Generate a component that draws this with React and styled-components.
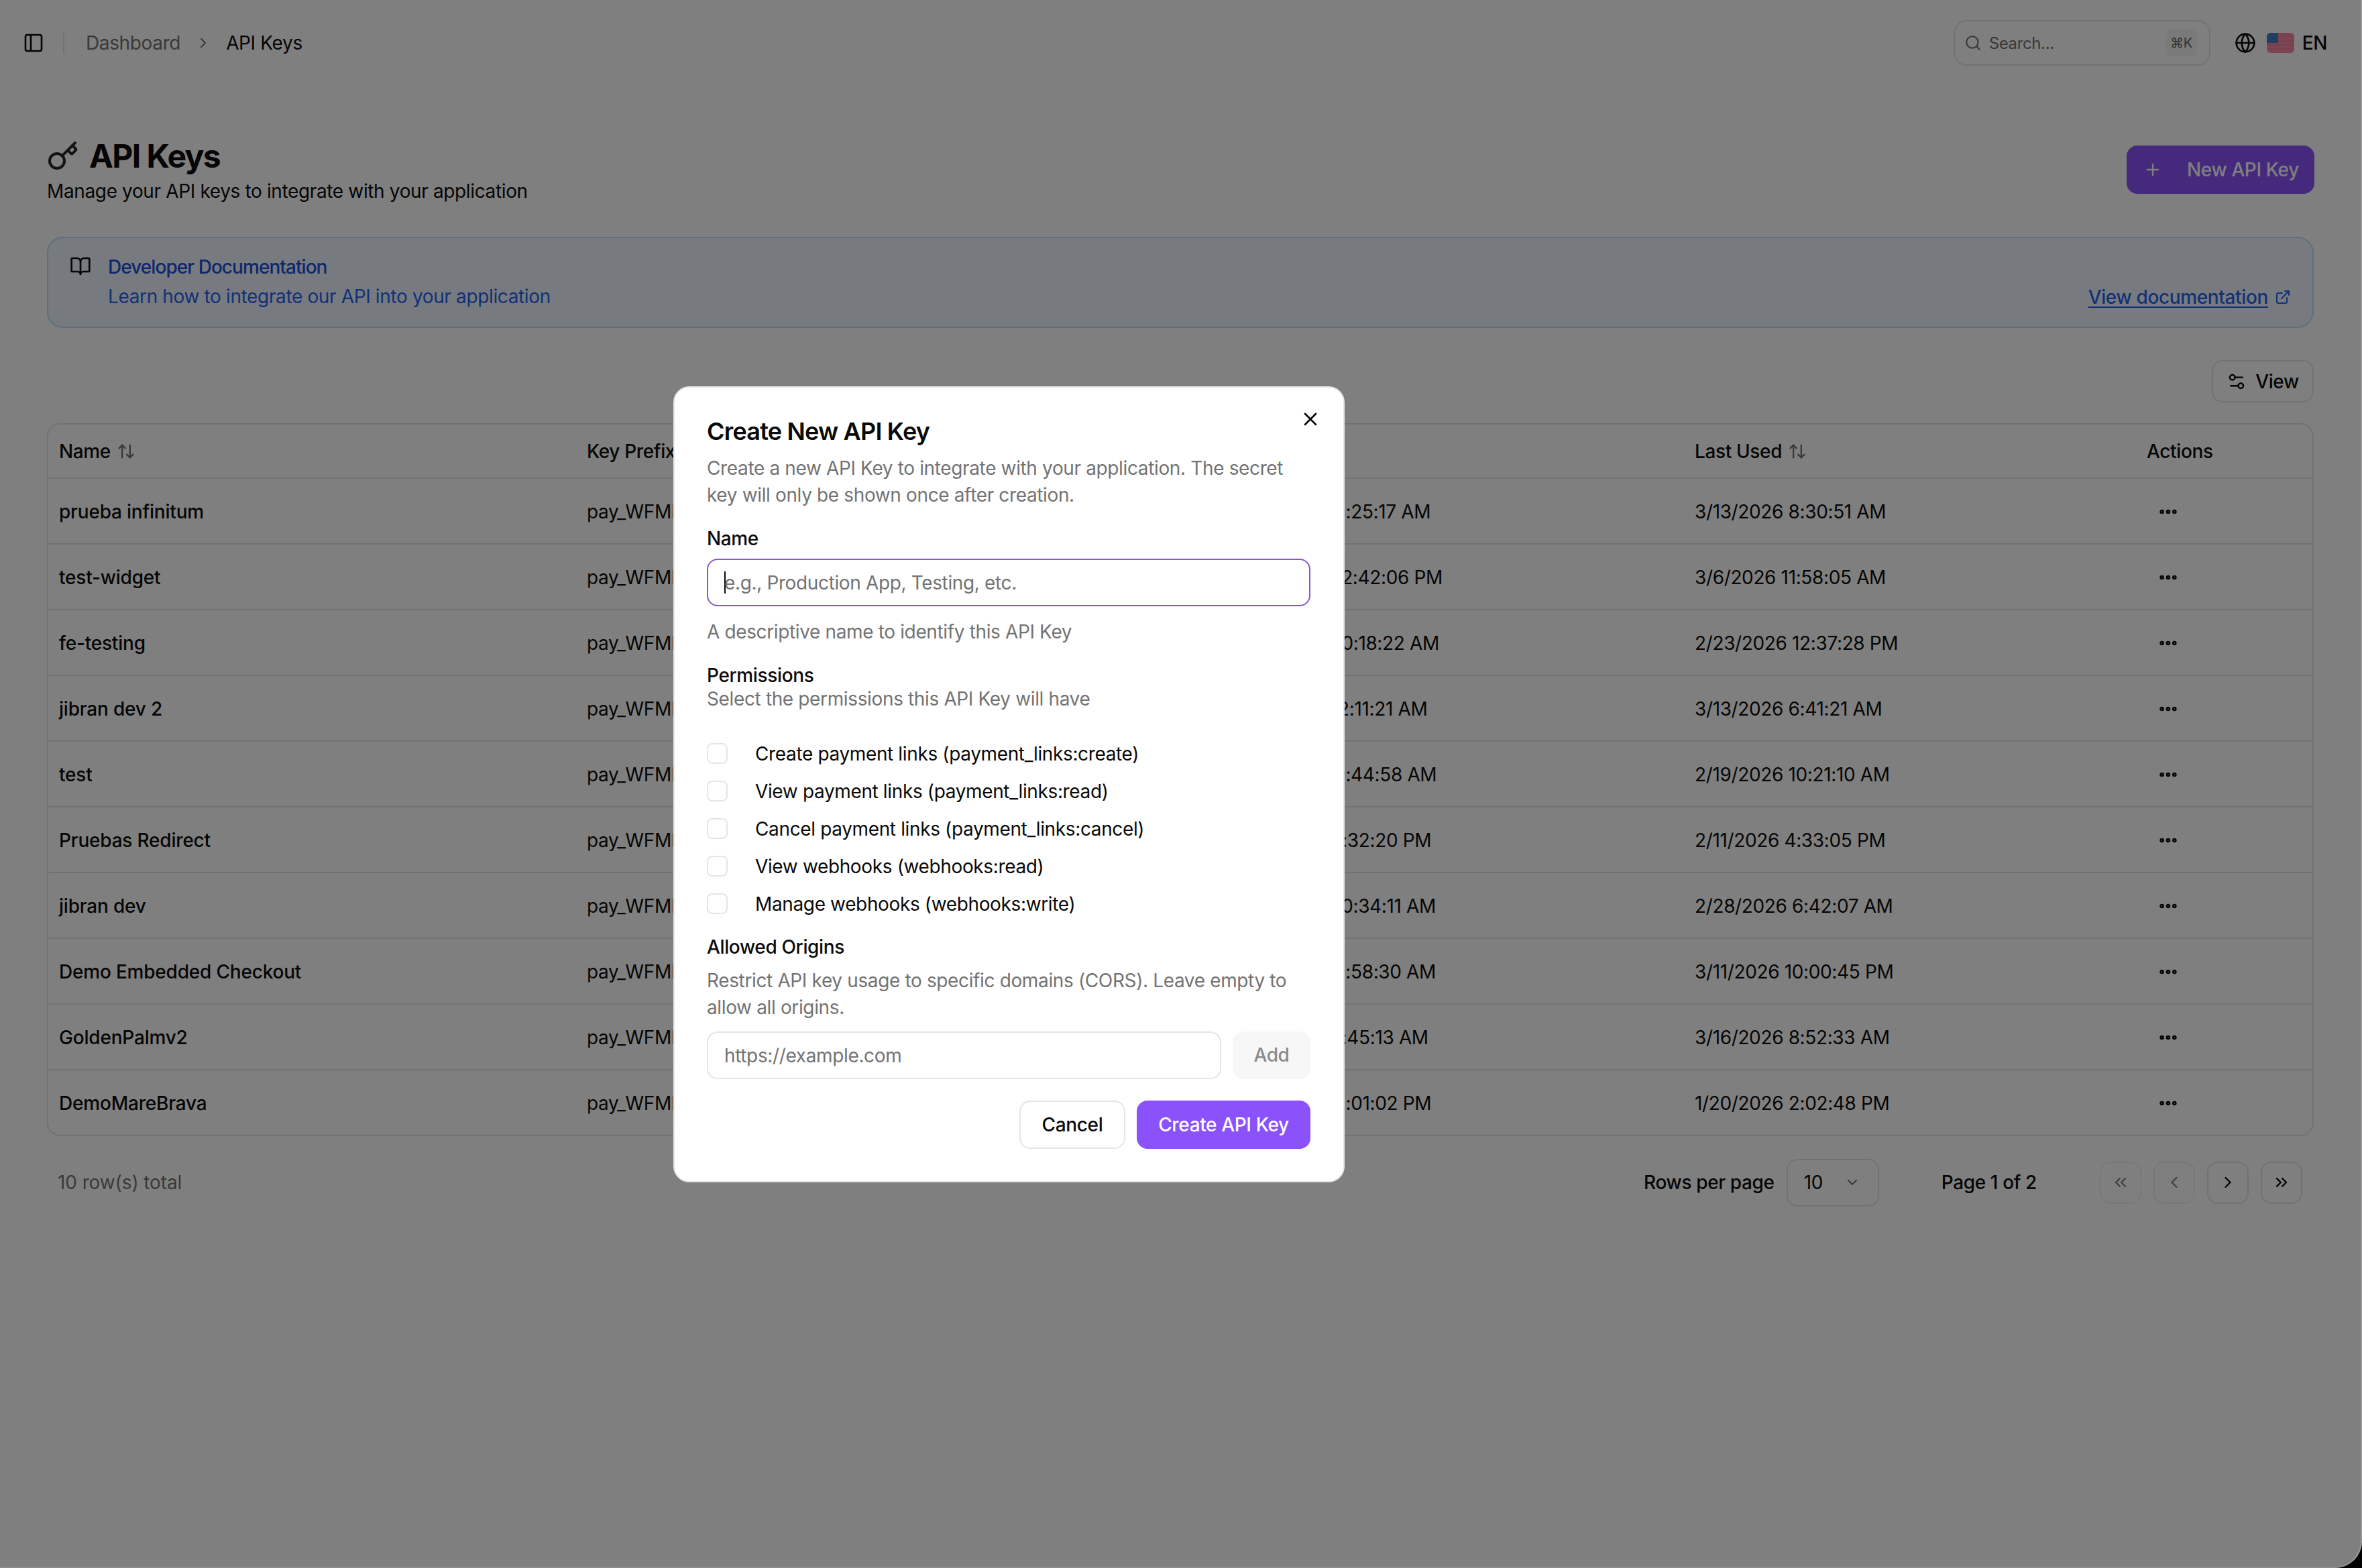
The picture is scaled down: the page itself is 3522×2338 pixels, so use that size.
import React from 'react';
import styled, { createGlobalStyle } from 'styled-components';
import {
  PanelLeft,
  ChevronRight,
  Search,
  Globe,
  Plus,
  BookOpen,
  ExternalLink,
  Settings2,
  ArrowUpDown,
  Ellipsis,
  ChevronDown,
  ChevronLeft,
  ChevronsLeft,
  ChevronsRight,
  Key,
  X,
} from 'lucide-react';

const GlobalStyle = createGlobalStyle`
  html, body {
    margin: 0;
    padding: 0;
    background: #000;
  }
  * { box-sizing: border-box; }
  button { letter-spacing: inherit; }
`;

const Window = styled.div`
  position: relative;
  width: 3522px;
  height: 2338px;
  overflow: hidden;
  background: #fff;
  border-bottom-right-radius: 40px;
  font-family: Inter, "Liberation Sans", sans-serif;
  font-size: 28px;
  letter-spacing: -0.013em;
  color: #0a0a0a;
`;

const TopBar = styled.header`
  height: 128px;
  padding: 0 52px 0 34px;
  display: flex;
  align-items: center;
`;
const Separator = styled.span`
  width: 2px;
  height: 32px;
  background: #e5e5e5;
  margin: 0 32px 0 28px;
`;
const Crumb = styled.span`
  color: ${(p) => (p.$current ? '#0a0a0a' : '#737373')};
`;
const CrumbSep = styled.span`
  display: flex;
  color: #737373;
  margin: 0 22px;
`;
const SearchBox = styled.div`
  margin-left: auto;
  width: 383px;
  height: 68px;
  border: 2px solid #e5e5e5;
  border-radius: 20px;
  padding: 0 18px 0 14px;
  display: flex;
  align-items: center;
  gap: 11px;
  font-size: 24px;
  color: #737373;
`;
const Kbd = styled.span`
  margin-left: auto;
  width: 46px;
  height: 40px;
  border-radius: 8px;
  background: #f5f5f5;
  display: flex;
  align-items: center;
  justify-content: center;
  font-size: 20px;
  font-weight: 500;
`;
const LangPicker = styled.div`
  margin-left: 36px;
  display: flex;
  align-items: center;
  font-weight: 500;
`;
const Flag = styled.svg`
  width: 41px;
  height: 30px;
  margin: 0 12px 0 16px;
  border-radius: 6px;
`;

const Main = styled.main`
  padding: 0 72px 0 70px;
`;
const TitleRow = styled.div`
  margin-top: 73px;
  display: flex;
  justify-content: space-between;
  align-items: flex-start;
`;
const TitleLine = styled.div`
  display: flex;
  align-items: center;
  gap: 15px;
`;
const PageTitle = styled.h1`
  margin: 0;
  font-size: 48px;
  line-height: 64px;
  font-weight: 700;
  letter-spacing: -1.6px;
`;
const PageSub = styled.p`
  margin: 0;
  line-height: 40px;
`;
const PrimaryButton = styled.button`
  height: 72px;
  width: ${(p) => p.$w}px;
  border: 0;
  border-radius: 16px;
  background: #8b52fb;
  color: #fff;
  font: 500 28px Inter, sans-serif;
  white-space: nowrap;
  display: flex;
  align-items: center;
  justify-content: center;
  padding: 0;
`;
const NewKeyButton = styled(PrimaryButton)`
  margin-top: 16px;
  margin-right: -1px;
  justify-content: flex-start;
  padding-left: 25px;
  gap: 37px;
`;
const DocCard = styled.section`
  margin-top: 48px;
  height: 136px;
  border: 2px solid #bfdbfe;
  border-radius: 24px;
  background: #eff6ff;
  padding: 21px 32px 0;
  display: flex;
  color: #2563eb;
`;
const DocIcon = styled.span`
  display: flex;
  margin-top: 5px;
  height: 32px;
  color: #0a0a0a;
`;
const DocText = styled.div`
  margin-left: 25px;
  line-height: 44px;
`;
const DocTitle = styled.div`
  font-weight: 500;
  letter-spacing: -0.95px;
  color: #1d4ed8;
`;
const DocLink = styled.a`
  margin-left: auto;
  align-self: flex-end;
  margin-bottom: 27px;
  display: flex;
  align-items: center;
  gap: 10px;
  font-weight: 500;
  span { text-decoration: underline; text-underline-offset: 4px; }
`;
const ToolRow = styled.div`
  margin-top: 48px;
  display: flex;
  justify-content: flex-end;
`;
const ViewButton = styled.button`
  height: 63px;
  width: 152px;
  border: 2px solid #e5e5e5;
  border-radius: 16px;
  background: #fff;
  font: 500 28px Inter, sans-serif;
  color: #0a0a0a;
  display: flex;
  align-items: center;
  justify-content: center;
  gap: 13px;
`;

const Table = styled.div`
  margin-top: 31px;
  border: 2px solid #e5e5e5;
  border-radius: 20px;
`;
const Row = styled.div`
  display: grid;
  grid-template-columns: 787px 975px 677px 674px 1fr;
  height: ${(p) => (p.$head ? 81 : p.$last ? 96 : 98)}px;
  align-items: center;
  border-bottom: ${(p) => (p.$last ? 0 : '2px solid #e5e5e5')};
  font-weight: ${(p) => (p.$head ? 500 : 400)};
`;
const Cell = styled.div`
  padding: 1px 0 0 16px;
  white-space: nowrap;
  display: flex;
  align-items: center;
  gap: 9px;
  font-weight: ${(p) => (p.$name ? 500 : 'inherit')};
  letter-spacing: ${(p) => (p.$name ? '-0.2px' : 'inherit')};
`;
const RowMenu = styled.span`
  display: flex;
  margin-left: 16px;
`;

const Pager = styled.div`
  margin-top: 33px;
  height: 72px;
  padding: 0 17px 0 16px;
  display: flex;
  align-items: center;
`;
const TotalText = styled.span`
  color: #737373;
  letter-spacing: -0.1px;
  margin-right: auto;
`;
const PagerLabel = styled.span`
  font-weight: 500;
`;
const RowsSelect = styled.div`
  width: 138px;
  height: 71px;
  margin: 0 93px 0 18px;
  padding: 0 26px 0 24px;
  border: 2px solid #e5e5e5;
  border-radius: 16px;
  display: flex;
  align-items: center;
  justify-content: space-between;
`;
const PageButtons = styled.div`
  margin-left: 94px;
  display: flex;
  gap: 18px;
`;
const PageButton = styled.button`
  width: 62px;
  height: 63px;
  border: 2px solid #e5e5e5;
  border-radius: 16px;
  background: #fff;
  padding: 0;
  display: flex;
  align-items: center;
  justify-content: center;
  color: #0a0a0a;
  opacity: ${(p) => (p.disabled ? 0.5 : 1)};
`;

const Overlay = styled.div`
  position: absolute;
  inset: 0;
  background: rgba(0, 0, 0, 0.5);
  display: flex;
  align-items: center;
  padding-left: 1004px;
  &::after {
    content: '';
    position: absolute;
    inset: 0;
    border-right: 2px solid rgba(255, 255, 255, 0.2);
    border-bottom: 2px solid rgba(255, 255, 255, 0.1);
    border-bottom-right-radius: 40px;
    pointer-events: none;
  }
`;
const Dialog = styled.div`
  position: relative;
  width: 1001px;
  height: 1187px;
  background: #fff;
  border: 2px solid #e5e5e5;
  border-radius: 24px;
  padding: 43px 49px 0 48px;
`;
const CloseButton = styled.button`
  position: absolute;
  top: 31px;
  right: 33px;
  border: 0;
  background: none;
  padding: 0;
  display: flex;
  color: #0a0a0a;
`;
const DialogTitle = styled.h2`
  margin: 0;
  font-size: 36px;
  line-height: 44px;
  font-weight: 600;
  letter-spacing: -0.8px;
`;
const Muted = styled.p`
  margin: ${(p) => p.$mt || 0}px 0 0;
  color: #737373;
  line-height: 40px;
`;
const Label = styled.div`
  margin-top: ${(p) => p.$mt || 0}px;
  font-weight: 500;
  line-height: 34px;
`;
const Field = styled.div`
  height: 71px;
  flex: 1;
  border: 2px solid ${(p) => (p.$focus ? '#8458d0' : '#e5e5e5')};
  border-radius: 16px;
  padding: 1px 24px 0;
  display: flex;
  align-items: center;
  color: #737373;
`;
const NameField = styled(Field)`
  margin-top: 13px;
`;
const Caret = styled.span`
  width: 2px;
  height: 33px;
  margin-right: -2px;
  background: #0a0a0a;
`;
const PermList = styled.div`
  margin-top: 34px;
`;
const PermRow = styled.label`
  height: 56px;
  display: flex;
  align-items: center;
  gap: 41px;
`;
const CheckBox = styled.span`
  width: 31px;
  height: 31px;
  border: 2px solid #e5e5e5;
  border-radius: 8px;
`;
const OriginRow = styled.div`
  margin-top: 16px;
  display: flex;
  gap: 17px;
`;
const AddButton = styled.button`
  width: 116px;
  height: 71px;
  border: 0;
  border-radius: 16px;
  background: #f7f7f7;
  color: #8a8a8a;
  font: 500 28px Inter, sans-serif;
`;
const DialogActions = styled.div`
  margin-top: 32px;
  display: flex;
  justify-content: flex-end;
  gap: 17px;
`;
const CancelButton = styled.button`
  width: 158px;
  height: 72px;
  border: 2px solid #e5e5e5;
  border-radius: 16px;
  background: #fff;
  color: #0a0a0a;
  font: 500 28px Inter, sans-serif;
`;

const rows = [
  ['prueba infinitum', '3/13/2026 8:25:17 AM', '3/13/2026 8:30:51 AM'],
  ['test-widget', '2/12/2026 12:42:06 PM', '3/6/2026 11:58:05 AM'],
  ['fe-testing', '2/13/2026 10:18:22 AM', '2/23/2026 12:37:28 PM'],
  ['jibran dev 2', '1/10/2026 12:11:21 AM', '3/13/2026 6:41:21 AM'],
  ['test', '2/19/2026 9:44:58 AM', '2/19/2026 10:21:10 AM'],
  ['Pruebas Redirect', '2/11/2026 4:32:20 PM', '2/11/2026 4:33:05 PM'],
  ['jibran dev', '2/12/2026 10:34:11 AM', '2/28/2026 6:42:07 AM'],
  ['Demo Embedded Checkout', '3/21/2026 9:58:30 AM', '3/11/2026 10:00:45 PM'],
  ['GoldenPalmv2', '3/11/2026 8:45:13 AM', '3/16/2026 8:52:33 AM'],
  ['DemoMareBrava', '1/20/2026 2:01:02 PM', '1/20/2026 2:02:48 PM'],
];

const permissions = [
  'Create payment links (payment_links:create)',
  'View payment links (payment_links:read)',
  'Cancel payment links (payment_links:cancel)',
  'View webhooks (webhooks:read)',
  'Manage webhooks (webhooks:write)',
];

const UsFlag = () => (
  <Flag viewBox="0 0 41 30">
    <rect width="41" height="30" fill="#f5829f" />
    <path d="M0 9h41M0 15h41M0 21h41M0 27h41" stroke="#ffb0c0" strokeWidth="2" opacity="0.35" />
    <rect width="17" height="15" fill="#3f7fc0" />
  </Flag>
);

const App = () => (
  <Window>
    <GlobalStyle />
    <TopBar>
      <PanelLeft size={32} strokeWidth={2} />
      <Separator />
      <Crumb>Dashboard</Crumb>
      <CrumbSep><ChevronRight size={24} /></CrumbSep>
      <Crumb $current>API Keys</Crumb>
      <SearchBox>
        <Search size={26} />
        Search...
        <Kbd>⌘K</Kbd>
      </SearchBox>
      <LangPicker>
        <Globe size={32} strokeWidth={2} />
        <UsFlag />
        EN
      </LangPicker>
    </TopBar>
    <Main>
      <TitleRow>
        <div>
          <TitleLine>
            <Key size={48} color="#27272a" />
            <PageTitle>API Keys</PageTitle>
          </TitleLine>
          <PageSub>Manage your API keys to integrate with your application</PageSub>
        </div>
        <NewKeyButton $w={280}>
          <Plus size={28} />
          New API Key
        </NewKeyButton>
      </TitleRow>
      <DocCard>
        <DocIcon><BookOpen size={32} /></DocIcon>
        <DocText>
          <DocTitle>Developer Documentation</DocTitle>
          <div>Learn how to integrate our API into your application</div>
        </DocText>
        <DocLink>
          <span>View documentation</span>
          <ExternalLink size={24} />
        </DocLink>
      </DocCard>
      <ToolRow>
        <ViewButton>
          <Settings2 size={30} />
          View
        </ViewButton>
      </ToolRow>
      <Table>
        <Row $head>
          <Cell>Name <ArrowUpDown size={28} color="#737373" /></Cell>
          <Cell>Key Prefix</Cell>
          <Cell>Created</Cell>
          <Cell>Last Used <ArrowUpDown size={28} color="#737373" /></Cell>
          <Cell>Actions</Cell>
        </Row>
        {rows.map(([name, created, used], i) => (
          <Row key={name} $last={i === rows.length - 1}>
            <Cell $name>{name}</Cell>
            <Cell>pay_WFMIxxxxxxxx</Cell>
            <Cell>{created}</Cell>
            <Cell>{used}</Cell>
            <Cell><RowMenu><Ellipsis size={32} strokeWidth={3} /></RowMenu></Cell>
          </Row>
        ))}
      </Table>
      <Pager>
        <TotalText>10 row(s) total</TotalText>
        <PagerLabel>Rows per page</PagerLabel>
        <RowsSelect>
          10
          <ChevronDown size={24} color="#737373" />
        </RowsSelect>
        <PagerLabel>Page 1 of 2</PagerLabel>
        <PageButtons>
          <PageButton disabled><ChevronsLeft size={28} /></PageButton>
          <PageButton disabled><ChevronLeft size={28} /></PageButton>
          <PageButton><ChevronRight size={28} /></PageButton>
          <PageButton><ChevronsRight size={28} /></PageButton>
        </PageButtons>
      </Pager>
    </Main>
    <Overlay>
      <Dialog>
        <CloseButton><X size={32} /></CloseButton>
        <DialogTitle>Create New API Key</DialogTitle>
        <Muted $mt={13}>
          Create a new API Key to integrate with your application. The secret key will only be shown once after creation.
        </Muted>
        <Label $mt={28}>Name</Label>
        <NameField $focus>
          <Caret />
          e.g., Production App, Testing, etc.
        </NameField>
        <Muted $mt={18}>A descriptive name to identify this API Key</Muted>
        <Label $mt={28}>Permissions</Label>
        <Muted $mt={-2}>Select the permissions this API Key will have</Muted>
        <PermList>
          {permissions.map((perm) => (
            <PermRow key={perm}>
              <CheckBox />
              {perm}
            </PermRow>
          ))}
        </PermList>
        <Label $mt={19}>Allowed Origins</Label>
        <Muted $mt={13}>
          Restrict API key usage to specific domains (CORS). Leave empty to allow all origins.
        </Muted>
        <OriginRow>
          <Field>https://example.com</Field>
          <AddButton>Add</AddButton>
        </OriginRow>
        <DialogActions>
          <CancelButton>Cancel</CancelButton>
          <PrimaryButton $w={259}>Create API Key</PrimaryButton>
        </DialogActions>
      </Dialog>
    </Overlay>
  </Window>
);

export default App;
